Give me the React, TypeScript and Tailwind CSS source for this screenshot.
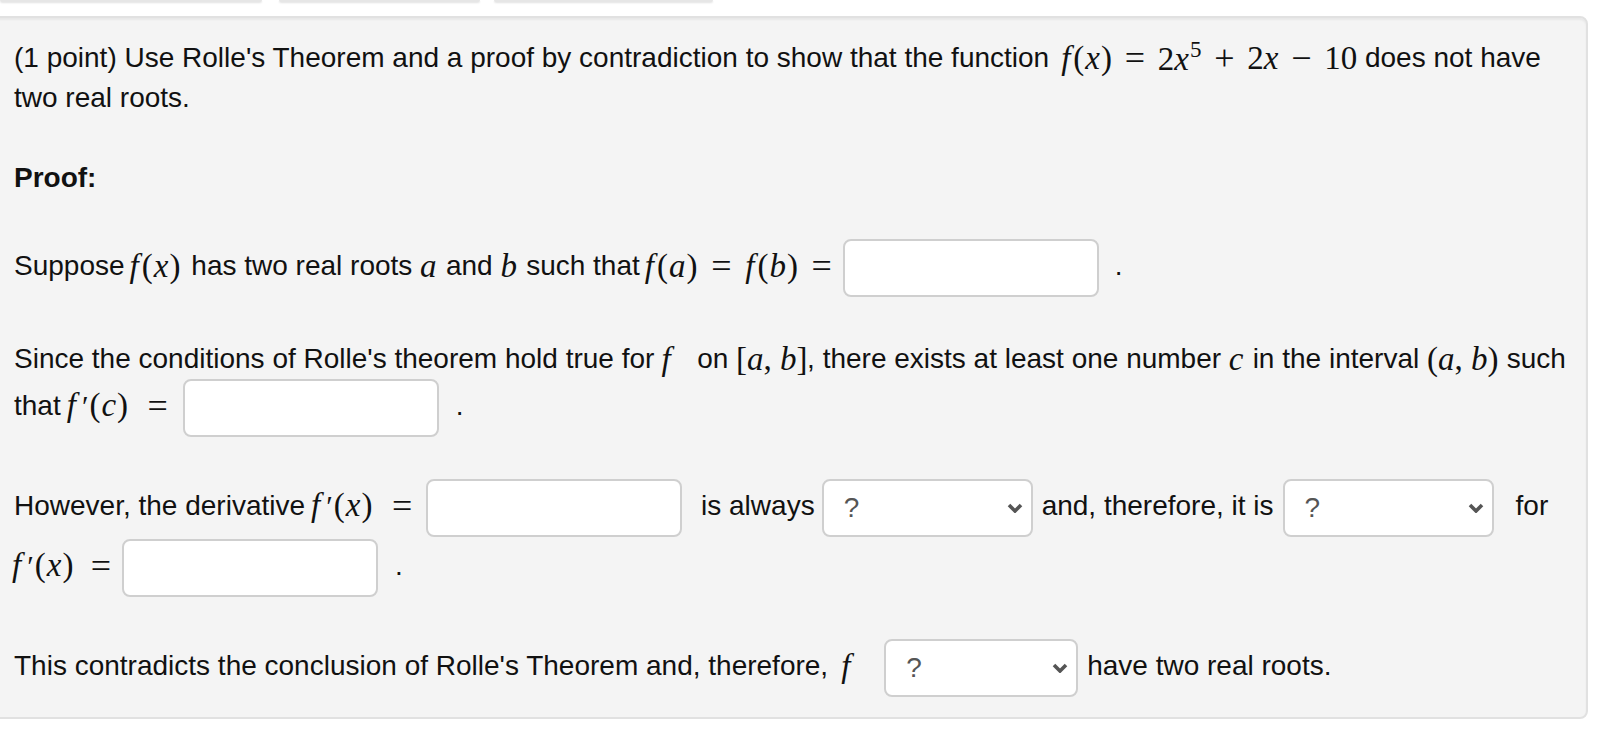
import React from 'react';

// serif "math" text, a rough stand-in for the MathJax output
const mathFont = "[font-family:'Liberation_Serif','Times_New_Roman',serif] text-[33px] leading-[40px]";

function Math({ className, children }: { className: string; children: React.ReactNode }) {
  return <span className={`flex shrink-0 items-center justify-between ${mathFont} ${className}`}>{children}</span>;
}

function Op({ c }: { c: string }) {
  return <span className="w-[26px] text-center text-[36px] leading-[40px]">{c}</span>;
}

function F({ arg, prime }: { arg: string; prime?: boolean }) {
  return (
    <span className="whitespace-nowrap">
      <i className="mr-[3px]">f</i>
      {prime && <span className="ml-[3px] mr-[1px] text-[30px]">′</span>}
      (<i className="mx-[1px]">{arg}</i>)
    </span>
  );
}

function Field({ className }: { className: string }) {
  return <div className={`h-[58px] shrink-0 rounded-[8px] border-2 border-[#cfcfcf] bg-white ${className}`} />;
}

function Choice({ className }: { className: string }) {
  return (
    <div
      className={`flex h-[58px] shrink-0 items-center justify-between rounded-[8px] border-2 border-[#cfcfcf] bg-white pl-[20px] pr-[8px] ${className}`}
    >
      <span className="text-[#555555]">?</span>
      <svg width="16" height="10" viewBox="0 0 16 10" fill="none">
        <polyline points="2,2 8,8 14,2" stroke="#555555" strokeWidth="3.6" strokeLinejoin="miter" />
      </svg>
    </div>
  );
}

export default function App() {
  return (
    <div className="min-h-screen w-full overflow-hidden bg-white [font-family:'Liberation_Sans',Arial,sans-serif] text-[28px] leading-[40px] text-[#111111]">
      {/* edges of the tabs above the problem */}
      <div className="flex h-[2px]">
        <div className="h-[2px] w-[262px] rounded-b-[4px] bg-[#e6e6e6] shadow-[0_1px_2px_rgba(0,0,0,0.12)]" />
        <div className="ml-[17px] h-[2px] w-[201px] rounded-b-[4px] bg-[#e6e6e6] shadow-[0_1px_2px_rgba(0,0,0,0.12)]" />
        <div className="ml-[14px] h-[2px] w-[219px] rounded-b-[4px] bg-[#e6e6e6] shadow-[0_1px_2px_rgba(0,0,0,0.12)]" />
      </div>

      <div className="-ml-[10px] mt-[14px] w-[1598px] rounded-[8px] border-2 border-[#e1e1e1] bg-[#f4f4f4] pb-[20px] pl-[22px] pt-[20px] shadow-[inset_0_2px_2px_rgba(0,0,0,0.05)]">
        <div className="flex h-[40px] items-center whitespace-pre">
          <span>(1 point) Use Rolle's Theorem and a proof by contradiction to show that the function</span>
          <Math className="ml-[12px] w-[296px]">
            <F arg="x" />
            <Op c="=" />
            <span className="whitespace-nowrap">
              2<i>x</i>
              <span className="ml-[1px] align-[13px] text-[23px] leading-none">5</span>
            </span>
            <Op c="+" />
            <span className="whitespace-nowrap">
              2<i>x</i>
            </span>
            <Op c="−" />
            <span>10</span>
          </Math>
          <span> does not have</span>
        </div>
        <div className="h-[40px]">two real roots.</div>
        <div className="h-[40px]" />
        <div className="h-[40px] font-bold">Proof:</div>
        <div className="h-[40px]" />

        <div className="flex h-[60px] items-center whitespace-pre">
          <span className="mb-[5px]">Suppose</span>
          <Math className="mb-[5px] ml-[5px] w-[54px]">
            <F arg="x" />
          </Math>
          <span className="mb-[5px]"> has two real roots </span>
          <Math className="mb-[5px] w-[18px]">
            <i>a</i>
          </Math>
          <span className="mb-[5px]"> and </span>
          <Math className="mb-[5px] w-[18px]">
            <i>b</i>
          </Math>
          <span className="mb-[5px]"> such that</span>
          <Math className="mb-[5px] ml-[5px] w-[190px]">
            <F arg="a" />
            <Op c="=" />
            <F arg="b" />
            <Op c="=" />
          </Math>
          <Field className="ml-[8px] w-[256px]" />
          <span className="mb-[5px] ml-[16px]">.</span>
        </div>

        <div className="mt-[41px] flex h-[40px] items-center whitespace-pre">
          <span>Since the conditions of Rolle's theorem hold true for</span>
          <Math className="ml-[7px] w-[28px]">
            <i>f</i>
          </Math>
          <span> on </span>
          <Math className="w-[71px]">
            <span className="whitespace-pre">
              [<i>a</i>, <i>b</i>]
            </span>
          </Math>
          <span>, there exists at least one number </span>
          <Math className="w-[16px]">
            <i>c</i>
          </Math>
          <span> in the interval </span>
          <Math className="w-[72px]">
            <span className="whitespace-pre">
              (<i>a</i>, <i>b</i>)
            </span>
          </Math>
          <span> such</span>
        </div>
        <div className="flex h-[58px] items-center whitespace-pre">
          <span className="mb-[5px]">that</span>
          <Math className="mb-[5px] ml-[6px] w-[104px]">
            <F arg="c" prime />
            <Op c="=" />
          </Math>
          <Field className="ml-[12px] w-[256px]" />
          <span className="mb-[5px] ml-[17px]">.</span>
        </div>

        <div className="mt-[42px] flex h-[58px] items-center whitespace-pre">
          <span className="mb-[5px]">However, the derivative</span>
          <Math className="mb-[5px] ml-[6px] w-[104px]">
            <F arg="x" prime />
            <Op c="=" />
          </Math>
          <Field className="ml-[11px] w-[256px]" />
          <span className="mb-[5px] ml-[19px]">is always</span>
          <Choice className="ml-[7px] w-[211px]" />
          <span className="mb-[5px] ml-[9px]">and, therefore, it is</span>
          <Choice className="ml-[9px] w-[211px]" />
          <span className="mb-[5px] ml-[22px]">for</span>
        </div>
        <div className="mt-[2px] flex h-[58px] items-center whitespace-pre">
          <Math className="mb-[5px] -ml-[2px] w-[102px]">
            <F arg="x" prime />
            <Op c="=" />
          </Math>
          <Field className="ml-[8px] w-[256px]" />
          <span className="mb-[5px] ml-[17px]">.</span>
        </div>

        <div className="mt-[42px] flex h-[58px] items-center whitespace-pre">
          <span className="mb-[5px]">This contradicts the conclusion of Rolle's Theorem and, therefore,</span>
          <Math className="mb-[5px] ml-[13px] w-[21px]">
            <i>f</i>
          </Math>
          <Choice className="ml-[22px] w-[194px]" />
          <span className="mb-[5px] ml-[9px]">have two real roots.</span>
        </div>
      </div>
    </div>
  );
}
